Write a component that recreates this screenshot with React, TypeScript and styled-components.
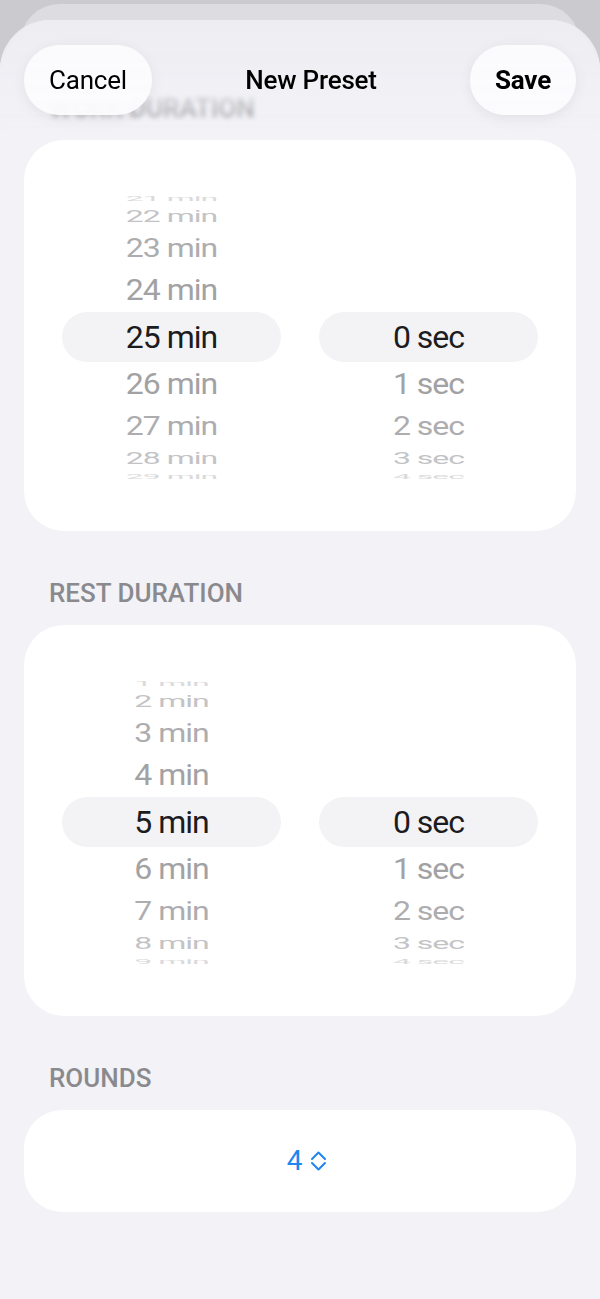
import React from "react";
import styled, { createGlobalStyle } from "styled-components";

const GlobalStyle = createGlobalStyle`
  html, body {
    margin: 0;
    padding: 0;
    background: #cbcbcf;
  }
  body {
    font-family: Roboto, "Liberation Sans", sans-serif;
    -webkit-font-smoothing: antialiased;
  }
`;

// row profile by distance from the selected row (fake 3D wheel)
const ROW_HEIGHTS = [50, 44, 40, 24, 12];
const ROW_SCALES = [1, 0.93, 0.8, 0.52, 0.24];
const ROW_COLORS = ["#1c1c1e", "#a2a2a5", "#adadb0", "#c3c3c6", "#dadadc"];

type WheelProps = {
  items: string[];
  selected: number;
};

const Wheel: React.FC<WheelProps> = ({ items, selected }) => {
  return (
    <WheelColumn>
      {items.map((label, index) => {
        const d = Math.min(Math.abs(index - selected), 4);
        return (
          <WheelRow key={index} $h={ROW_HEIGHTS[d]} $active={d === 0}>
            <WheelText
              $color={ROW_COLORS[d]}
              style={{ transform: `scaleY(${ROW_SCALES[d]})` }}
            >
              {label}
            </WheelText>
          </WheelRow>
        );
      })}
    </WheelColumn>
  );
};

const range = (from: number, to: number, unit: string) => {
  const out: string[] = [];
  for (let i = from; i <= to; i++) out.push(`${i} ${unit}`);
  return out;
};

const secItems = ["", "", "", "", ...range(0, 4, "sec")];

const App: React.FC = () => {
  return (
    <>
      <GlobalStyle />
      <Screen>
        <BackSheet />
        <Sheet>
          <NavBar>
            <NavButton>Cancel</NavButton>
            <Title>New Preset</Title>
            <NavButton $bold>Save</NavButton>
          </NavBar>

          <Content>
            <SectionLabel>WORK DURATION</SectionLabel>
            <Card>
              <Picker>
                <Wheel items={range(21, 29, "min")} selected={4} />
                <Wheel items={secItems} selected={4} />
              </Picker>
            </Card>

            <SectionLabel>REST DURATION</SectionLabel>
            <Card>
              <Picker>
                <Wheel items={range(1, 9, "min")} selected={4} />
                <Wheel items={secItems} selected={4} />
              </Picker>
            </Card>

            <SectionLabel>ROUNDS</SectionLabel>
            <RoundsCard>
              <Stepper>
                <span>4</span>
                <svg width="17" height="24" viewBox="0 0 17 24" fill="none">
                  <path
                    d="M2 10 8.5 3.5 15 10M2 14l6.5 6.5L15 14"
                    stroke="currentColor"
                    strokeWidth="2"
                    strokeLinecap="round"
                    strokeLinejoin="round"
                  />
                </svg>
              </Stepper>
            </RoundsCard>
          </Content>
        </Sheet>
      </Screen>
    </>
  );
};

export default App;

const Screen = styled.div`
  display: grid;
  width: 600px;
  height: 1299px;
  overflow: hidden;
  background: #cbcbcf;
`;

const BackSheet = styled.div`
  grid-area: 1 / 1;
  margin: 4px 20px 0;
  background: #dddde1;
  border-radius: 40px 40px 0 0;
`;

const Sheet = styled.div`
  grid-area: 1 / 1;
  position: relative;
  margin-top: 20px;
  background: #f2f2f7;
  border-radius: 50px 50px 0 0;
  overflow: hidden;
`;

const NavBar = styled.div`
  position: absolute;
  top: 0;
  left: 0;
  right: 0;
  z-index: 2;
  height: 112px;
  padding: 25px 24px 0 24px;
  box-sizing: border-box;
  display: flex;
  align-items: flex-start;
  justify-content: space-between;
  background: linear-gradient(
    to bottom,
    rgba(236, 236, 241, 0.92) 0%,
    rgba(240, 240, 245, 0.6) 72%,
    rgba(242, 242, 247, 0) 100%
  );
  backdrop-filter: blur(2.5px);
  -webkit-backdrop-filter: blur(2.5px);
`;

const NavButton = styled.div<{ $bold?: boolean }>`
  height: 70px;
  padding: 0 25px;
  display: flex;
  align-items: center;
  border-radius: 35px;
  background: rgba(252, 252, 254, 0.94);
  box-shadow: 0 3px 14px rgba(0, 0, 0, 0.07);
  font-size: 26px;
  font-weight: ${(p) => (p.$bold ? 700 : 400)};
  color: #000;
  letter-spacing: -0.2px;
`;

const Title = styled.div`
  height: 70px;
  display: flex;
  align-items: center;
  font-size: 26px;
  font-weight: 500;
  color: #000;
  letter-spacing: -0.2px;
`;

const Content = styled.div`
  padding: 73px 24px 0;
  display: flex;
  flex-direction: column;
`;

const SectionLabel = styled.div`
  padding-left: 25px;
  font-size: 26px;
  line-height: 30px;
  font-weight: 500;
  color: #8a8a8e;
  margin-bottom: 17px;

  & + div + & {
    margin-top: 47px;
  }
`;

const Card = styled.div`
  height: 391px;
  background: #fff;
  border-radius: 40px;
  display: flex;
  align-items: center;
  justify-content: center;
  padding-top: 3px;
  box-sizing: border-box;
`;

const Picker = styled.div`
  display: grid;
  grid-template-columns: 219px 219px;
  column-gap: 38px;
`;

const WheelColumn = styled.div`
  height: 290px;
  display: flex;
  flex-direction: column;
  overflow: hidden;
`;

const WheelRow = styled.div<{ $h: number; $active: boolean }>`
  flex: 0 0 ${(p) => p.$h}px;
  min-height: 0;
  height: ${(p) => p.$h}px;
  display: flex;
  align-items: center;
  justify-content: center;
  border-radius: 25px;
  background: ${(p) => (p.$active ? "#f3f3f5" : "transparent")};
`;

const WheelText = styled.span<{ $color: string }>`
  display: block;
  flex-shrink: 0;
  font-size: 32px;
  line-height: 36px;
  letter-spacing: -1px;
  white-space: nowrap;
  color: ${(p) => p.$color};
`;

const RoundsCard = styled.div`
  height: 102px;
  background: #fff;
  border-radius: 38px;
  display: flex;
  align-items: center;
  justify-content: center;
`;

const Stepper = styled.div`
  display: inline-flex;
  align-items: center;
  gap: 8px;
  margin-left: 14px;
  color: #1f86ef;
  font-size: 28px;
  line-height: 1;
`;
